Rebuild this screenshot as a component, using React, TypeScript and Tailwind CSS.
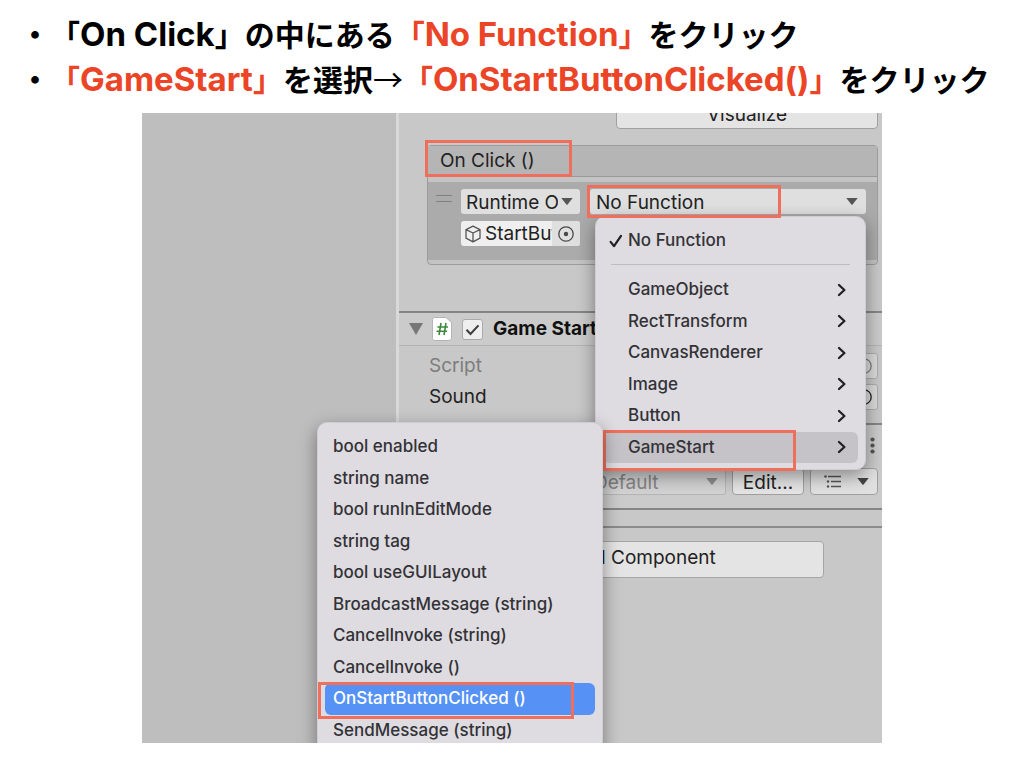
import type { ReactNode } from 'react';

function Jp({ children }: { children: ReactNode }) {
  return <span className="font-['Noto_Sans_CJK_JP',sans-serif] text-[30px] font-bold">{children}</span>;
}

function Arrow({ className }: { className: string }) {
  return (
    <svg viewBox="0 0 12 7" aria-hidden="true" className={`pointer-events-none h-[7px] w-3 ${className}`}>
      <path d="M0.3 0h11.4L6.6 6.5a0.8 0.8 0 0 1-1.2 0z" fill="currentColor" />
    </svg>
  );
}

function Target({ className = '' }: { className?: string }) {
  return (
    <svg viewBox="0 0 16 16" aria-hidden="true" className={`size-4 shrink-0 ${className}`}>
      <circle cx="8" cy="8" r="7.2" fill="none" stroke="currentColor" strokeWidth="1.3" />
      <circle cx="8" cy="8" r="2.2" fill="currentColor" />
    </svg>
  );
}

function Mark({ className }: { className: string }) {
  return <span aria-hidden="true" className={`pointer-events-none absolute z-30 border-[3px] border-[#ee6f5b] ${className}`} />;
}

const components = ['GameObject', 'RectTransform', 'CanvasRenderer', 'Image', 'Button', 'GameStart'];
const members = [
  'bool enabled',
  'string name',
  'bool runInEditMode',
  'string tag',
  'bool useGUILayout',
  'BroadcastMessage (string)',
  'CancelInvoke (string)',
  'CancelInvoke ()',
  'OnStartButtonClicked ()',
  'SendMessage (string)',
];

function FunctionMenu() {
  return (
    <div
      role="menu"
      className="absolute top-[103px] right-4 z-10 w-[271px] rounded-[10px] border border-[#cfcdd2] bg-[#dedce1] px-[7px] pb-[6px] text-[17px] font-medium text-[#333236] shadow-[0_6px_18px_rgba(0,0,0,0.4)]"
    >
      <button type="button" role="menuitemradio" aria-checked="true" className="flex h-[47px] w-full items-center pl-[6px] text-left">
        <svg viewBox="0 0 14 14" aria-hidden="true" className="mr-[5px] size-[14px]">
          <path d="M1.6 7.8 5 12.2 12 1.8" fill="none" stroke="#202022" strokeWidth="2.2" strokeLinecap="round" strokeLinejoin="round" />
        </svg>
        No Function
      </button>
      <hr className="mx-2 mb-[9px] border-[#bfbdc2]" />
      <div className="grid h-[189px] auto-rows-fr">
        {components.map((name) => (
          <button
            key={name}
            type="button"
            role="menuitem"
            className={`relative flex items-center justify-between rounded-md pr-[11px] pl-[25px] text-left ${name === 'GameStart' ? 'bg-[#c5c3c8]' : ''}`}
          >
            {name}
            <svg viewBox="0 0 10 14" aria-hidden="true" className="h-[14px] w-[10px]">
              <path d="m2 2 5.4 5L2 12" fill="none" stroke="#202022" strokeWidth="2.3" strokeLinecap="round" strokeLinejoin="round" />
            </svg>
            {name === 'GameStart' && <Mark className="-top-[2px] -bottom-2 left-0 w-[193px]" />}
          </button>
        ))}
      </div>
    </div>
  );
}

function MemberMenu() {
  return (
    <div
      role="menu"
      className="absolute top-[309px] right-[279px] z-20 w-[286px] rounded-t-[10px] border border-[#cfcdd2] bg-[#dedce1] px-[7px] pt-2 pb-2 text-[17px] font-medium text-[#333236] shadow-[0_6px_18px_rgba(0,0,0,0.4)]"
    >
      <div className="grid h-[315px] auto-rows-fr">
        {members.map((name) => (
          <button
            key={name}
            type="button"
            role="menuitem"
            className={`relative flex items-center rounded-md pl-2 text-left ${name.startsWith('OnStart') ? 'bg-[#5692f6] text-white' : ''}`}
          >
            {name}
            {name.startsWith('OnStart') && <Mark className="-top-px -bottom-1 -left-[7px] w-[256px]" />}
          </button>
        ))}
      </div>
    </div>
  );
}

function OnClickEvent() {
  return (
    <section className="mr-1 ml-7 rounded-[4px] border border-[#9c9c9c] bg-[#c4c4c4] pb-1">
      <h2 className="relative h-[31px] border-b border-[#999] bg-[#b5b5b5] pl-3 leading-[30px]">
        On Click ()
        <Mark className="-top-[6px] -left-[3px] h-[37px] w-[147px]" />
      </h2>
      <div className="mt-[5px] flex h-[78px] bg-[#ababab] pt-[7px] pr-[11px] pl-2">
        <div aria-hidden="true" className="mt-[6px] mr-[9px] h-[7px] w-4 shrink-0 border-y border-[#808080]" />
        <div className="flex w-[119px] shrink-0 flex-col gap-[7px]">
          <div className="relative h-[25px]">
            <select aria-label="Call state" className="size-full appearance-none overflow-hidden rounded-[3px] bg-[#dfdfdf] pr-[22px] pb-[3px] pl-[5px]">
              <option>Runtime Only</option>
            </select>
            <Arrow className="absolute top-[9px] right-[7px] text-[#555]" />
          </div>
          <div className="flex h-[25px] items-center overflow-hidden rounded-[3px] bg-[#efefef]">
            <svg viewBox="0 0 18 18" aria-hidden="true" className="ml-[3px] size-[18px] shrink-0">
              <path d="M9 1.2 16 4.6v8.6L9 16.8 2 13.2V4.6zM2 4.6 9 8l7-3.4M9 8v8.8" fill="none" stroke="#555" strokeWidth="1.3" strokeLinejoin="round" />
            </svg>
            <input aria-label="Target object" readOnly value="StartButton" className="ml-[3px] h-full w-[67px] min-w-0 bg-transparent" />
            <span className="flex h-full flex-1 items-center justify-center bg-[#dfdfdf] text-[#484848]">
              <Target />
            </span>
          </div>
        </div>
        <div className="relative ml-[10px] h-[25px] flex-1">
          <select aria-label="Function" className="size-full appearance-none rounded-[3px] bg-[#dfdfdf] pb-[3px] pl-[6px]">
            <option>No Function</option>
          </select>
          <Arrow className="absolute top-[9px] right-2 text-[#555]" />
          <Mark className="-top-1 -left-[3px] h-[33px] w-[194px]" />
        </div>
      </div>
    </section>
  );
}

function ScriptField({ label, muted }: { label: string; muted?: boolean }) {
  return (
    <div className={`flex h-[26px] items-center pr-1 pl-[30px] ${muted ? 'text-[#7d7d7d]' : 'text-[#222]'}`}>
      <span className="w-[200px]">{label}</span>
      <div className="flex h-full flex-1 items-center justify-end rounded-[3px] border border-[#adadad] bg-[#dadada] pr-[5px]">
        <Target />
      </div>
    </div>
  );
}

function Inspector() {
  return (
    <div className="relative w-[486px] shrink-0 border-l-[3px] border-[#d9d9d9] bg-[#c8c8c8] text-[19px] text-[#222]">
      <div className="flex justify-end pr-1">
        <button type="button" className="-mt-[14px] mb-4 h-[30px] w-[262px] rounded-[4px] border border-[#a0a0a0] bg-[#e4e4e4] pt-px">
          Visualize
        </button>
      </div>
      <OnClickEvent />

      <section className="mt-[46px] border-t-2 border-[#858585]">
        <div className="flex h-[33px] items-center border-b border-[#b3b3b3] bg-[#cbcbcb] pl-[10px]">
          <svg viewBox="0 0 14 12" aria-hidden="true" className="h-3 w-[14px]">
            <path d="M0 0h14L7 12z" fill="#777" />
          </svg>
          <svg viewBox="0 0 20 24" aria-hidden="true" className="ml-[9px] h-6 w-5">
            <path d="M2.5 .5H14l5.5 5V21a2.5 2.5 0 0 1-2.5 2.5H2.5a2 2 0 0 1-2-2v-19a2 2 0 0 1 2-2z" fill="#fff" stroke="#b5b5b5" />
            <path d="m9 6-2 12M14 6l-2 12M5.4 10H16M4.5 14.2H15" fill="none" stroke="#3d8a3d" strokeWidth="1.6" />
          </svg>
          <label className="ml-[10px] flex items-center font-bold text-[#111]">
            <span className="relative size-[21px]">
              <input type="checkbox" defaultChecked className="block size-full appearance-none rounded-[3px] border border-[#aaa] bg-[#efefef]" />
              <svg viewBox="0 0 21 21" aria-hidden="true" className="pointer-events-none absolute inset-0">
                <path d="m4.5 10.8 4 4.2 8-8.6" fill="none" stroke="#3f3f3f" strokeWidth="2.1" />
              </svg>
            </span>
            <span className="ml-[10px]">Game Start</span>
          </label>
        </div>
        <div className="flex flex-col gap-[5px] pt-[7px] pb-[13px]">
          <ScriptField label="Script" muted />
          <ScriptField label="Sound" />
        </div>
      </section>

      <section className="border-y-2 border-[#858585] bg-[#cbcbcb] pb-[13px]">
        <div className="flex h-[43px] items-start justify-end pt-3 pr-[7px]">
          <svg viewBox="0 0 5 17" aria-hidden="true" className="h-[17px] w-[5px] fill-[#555]">
            <circle cx="2.5" cy="2.5" r="2.1" />
            <circle cx="2.5" cy="8.5" r="2.1" />
            <circle cx="2.5" cy="14.5" r="2.1" />
          </svg>
        </div>
        <div className="flex h-[27px] justify-end gap-[6px] pr-1">
          <div className="relative w-[180px]">
            <select disabled aria-label="Preset" className="size-full appearance-none rounded-[3px] border border-[#b5b5b5] bg-[#d2d2d2] pb-[2px] pl-[47px] text-[#858585] opacity-100">
              <option>Default</option>
            </select>
            <Arrow className="absolute top-[10px] right-2 text-[#8c8c8c]" />
          </div>
          <button type="button" className="w-[72px] rounded-[4px] border border-[#a0a0a0] bg-[#e4e4e4] pb-[2px]">
            Edit...
          </button>
          <button type="button" aria-label="View options" className="flex w-[68px] items-center justify-between rounded-[4px] border border-[#a0a0a0] bg-[#e0e0e0] pr-2 pl-[13px]">
            <svg viewBox="0 0 17 13" aria-hidden="true" className="h-[13px] w-[17px]">
              <path d="M4 1.5h13M7 6.5h10M7 11.5h10" stroke="#555" strokeWidth="1.6" />
              <circle cx="1.5" cy="1.5" r="1.3" fill="#555" />
              <circle cx="4" cy="6.5" r="1.2" fill="#555" />
              <circle cx="4" cy="11.5" r="1.2" fill="#555" />
            </svg>
            <Arrow className="text-[#444]" />
          </button>
        </div>
      </section>
      <div className="mt-4 border-t-2 border-[#8c8c8c] pt-[13px] text-center">
        <button type="button" className="h-[37px] w-[366px] rounded-[4px] border border-[#a5a5a5] bg-[#e4e4e4] pb-[2px] pl-1">
          Add Component
        </button>
      </div>

      <FunctionMenu />
      <MemberMenu />
    </div>
  );
}

export default function App() {
  return (
    <main className="min-h-screen bg-white font-['Inter','Noto_Sans_CJK_JP',sans-serif]">
      <ul className="pt-[11px] pl-5 text-[33px] leading-[45px] font-bold whitespace-nowrap text-black">
        <li className="flex h-[45px]">
          <Jp>・</Jp>
          <span>
            <Jp>「</Jp>On Click<Jp>」の中にある</Jp>
            <span className="text-[#eb4427]"><Jp>「</Jp>No Function<Jp>」</Jp></span>
            <Jp>をクリック</Jp>
          </span>
        </li>
        <li className="flex h-[45px]">
          <Jp>・</Jp>
          <span>
            <span className="text-[#eb4427]"><Jp>「</Jp>GameStart<Jp>」</Jp></span>
            <Jp>を選択</Jp>
            <span className="font-['Noto_Sans_CJK_JP',sans-serif] text-[30px] font-normal">→</span>
            <span className="text-[#eb4427]"><Jp>「</Jp>OnStartButtonClicked()<Jp>」</Jp></span>
            <Jp>をクリック</Jp>
          </span>
        </li>
      </ul>
      <figure className="mx-auto mt-3 flex h-[630px] max-w-[740px] overflow-hidden">
        <div className="flex-1 bg-[#bebebe]" />
        <Inspector />
      </figure>
    </main>
  );
}
